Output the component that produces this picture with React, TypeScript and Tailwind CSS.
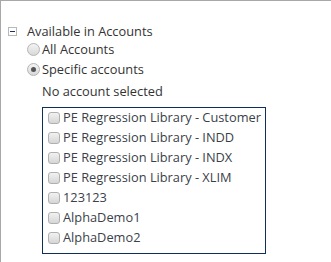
const accounts = [
  "PE Regression Library - Customer",
  "PE Regression Library - INDD",
  "PE Regression Library - INDX",
  "PE Regression Library - XLIM",
  "123123",
  "AlphaDemo1",
  "AlphaDemo2",
];

function Radio({ checked }: { checked?: boolean }) {
  return (
    <span className="flex h-[13px] w-[13px] shrink-0 items-center justify-center rounded-full border border-[#b5b5b5] bg-gradient-to-b from-[#f4f4f4] to-[#d8d8d8]">
      {checked && <span className="h-[5px] w-[5px] rounded-full bg-[#555]" />}
    </span>
  );
}

function Checkbox() {
  return (
    <span className="h-[12px] w-[12px] shrink-0 rounded-[3px] border border-[#b0b0b0] bg-gradient-to-b from-[#f2f2f2] to-[#d6d6d6]" />
  );
}

export default function App() {
  return (
    <div
      className="h-[262px] w-[331px] border-l border-t border-[#a8a8a8] bg-white pl-[7px] pt-[21px] text-[12.8px] text-[#333]"
      style={{ fontFamily: "'Open Sans', sans-serif" }}
    >
      <div className="flex items-center">
        <span className="mr-[10px] flex h-[9px] w-[9px] items-center justify-center border border-[#b8b8b8]">
          <span className="h-px w-[5px] bg-[#1c2f6e]" />
        </span>
        <span className="leading-[18px]">Available in Accounts</span>
      </div>
      <div className="ml-[19px] flex flex-col gap-[2px]">
        <label className="flex items-center gap-[2px] leading-[18px]">
          <Radio />
          All Accounts
        </label>
        <label className="flex items-center gap-[2px] leading-[18px]">
          <Radio checked />
          Specific accounts
        </label>
      </div>
      <div className="ml-[34px] mt-[4px] leading-[18px]">No account selected</div>
      <div className="ml-[34px] mt-[7px] w-[224px] border border-[#0f2e5c] px-[5px] pb-[5px]">
        {accounts.map((a) => (
          <div key={a} className="flex h-[20px] items-center gap-[3px] text-[#3b3f4a]">
            <Checkbox />
            <span className="whitespace-nowrap">{a}</span>
          </div>
        ))}
      </div>
    </div>
  );
}
